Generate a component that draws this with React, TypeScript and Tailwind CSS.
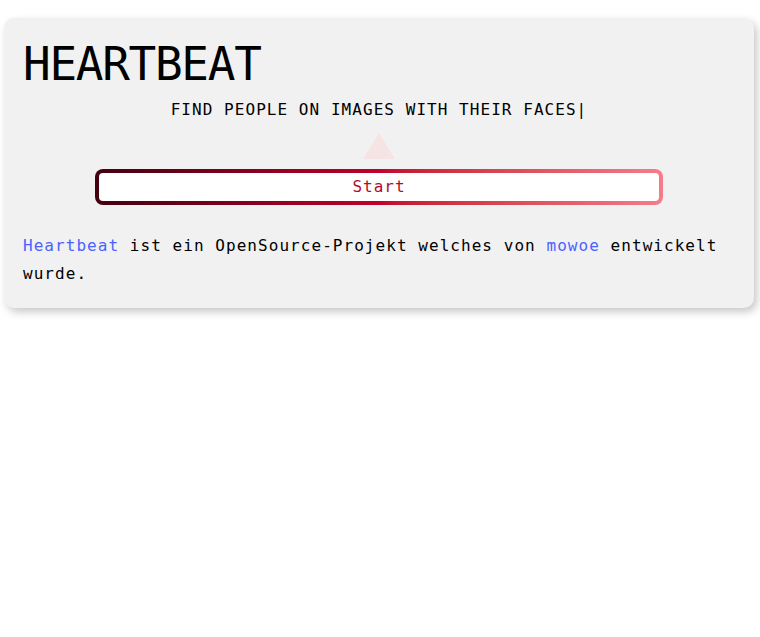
import React from "react"

const mono = { fontFamily: '"DejaVu Sans Mono", "Liberation Mono", monospace' }

export default function App() {
  return (
    <div className="min-h-[637px] w-[760px] bg-white pt-[18px]" style={mono}>
      <div className="ml-[4px] w-[750px] rounded-[10px] bg-[#f1f1f1] px-[19px] pt-[20px] pb-[20px] shadow-[3px_4px_8px_rgba(0,0,0,0.22)]">
        <h1 className="text-[46px] leading-[52px] tracking-[-1.3px] text-black">HEARTBEAT</h1>

        <p className="mt-[10px] text-center text-[16px] leading-[20px] tracking-[1.05px] text-black">
          FIND PEOPLE ON IMAGES WITH THEIR FACES|
        </p>

        {/* little arrow pointing at the headline */}
        <div className="mt-[13px] flex justify-center">
          <svg width="32" height="26" viewBox="0 0 32 26" className="block">
            <polygon points="16,0 32,26 0,26" fill="#f6e4e5" />
          </svg>
        </div>

        <div className="mt-[10px] flex justify-center">
          <div className="w-[568px] rounded-[8px] bg-gradient-to-r from-[#45000f] via-[#c2002a] to-[#f57c8a] p-[4px]">
            <button className="block h-[28px] w-full rounded-[4px] bg-white text-center text-[16px] tracking-[1px] text-[#b3092c]">
              Start
            </button>
          </div>
        </div>

        <p className="mt-[27px] text-[16px] leading-[28px] tracking-[1.05px] text-black">
          <a className="text-[#4a63ff]">Heartbeat</a> ist ein OpenSource-Projekt welches von{" "}
          <a className="text-[#4a63ff]">mowoe</a> entwickelt wurde.
        </p>
      </div>
    </div>
  )
}
